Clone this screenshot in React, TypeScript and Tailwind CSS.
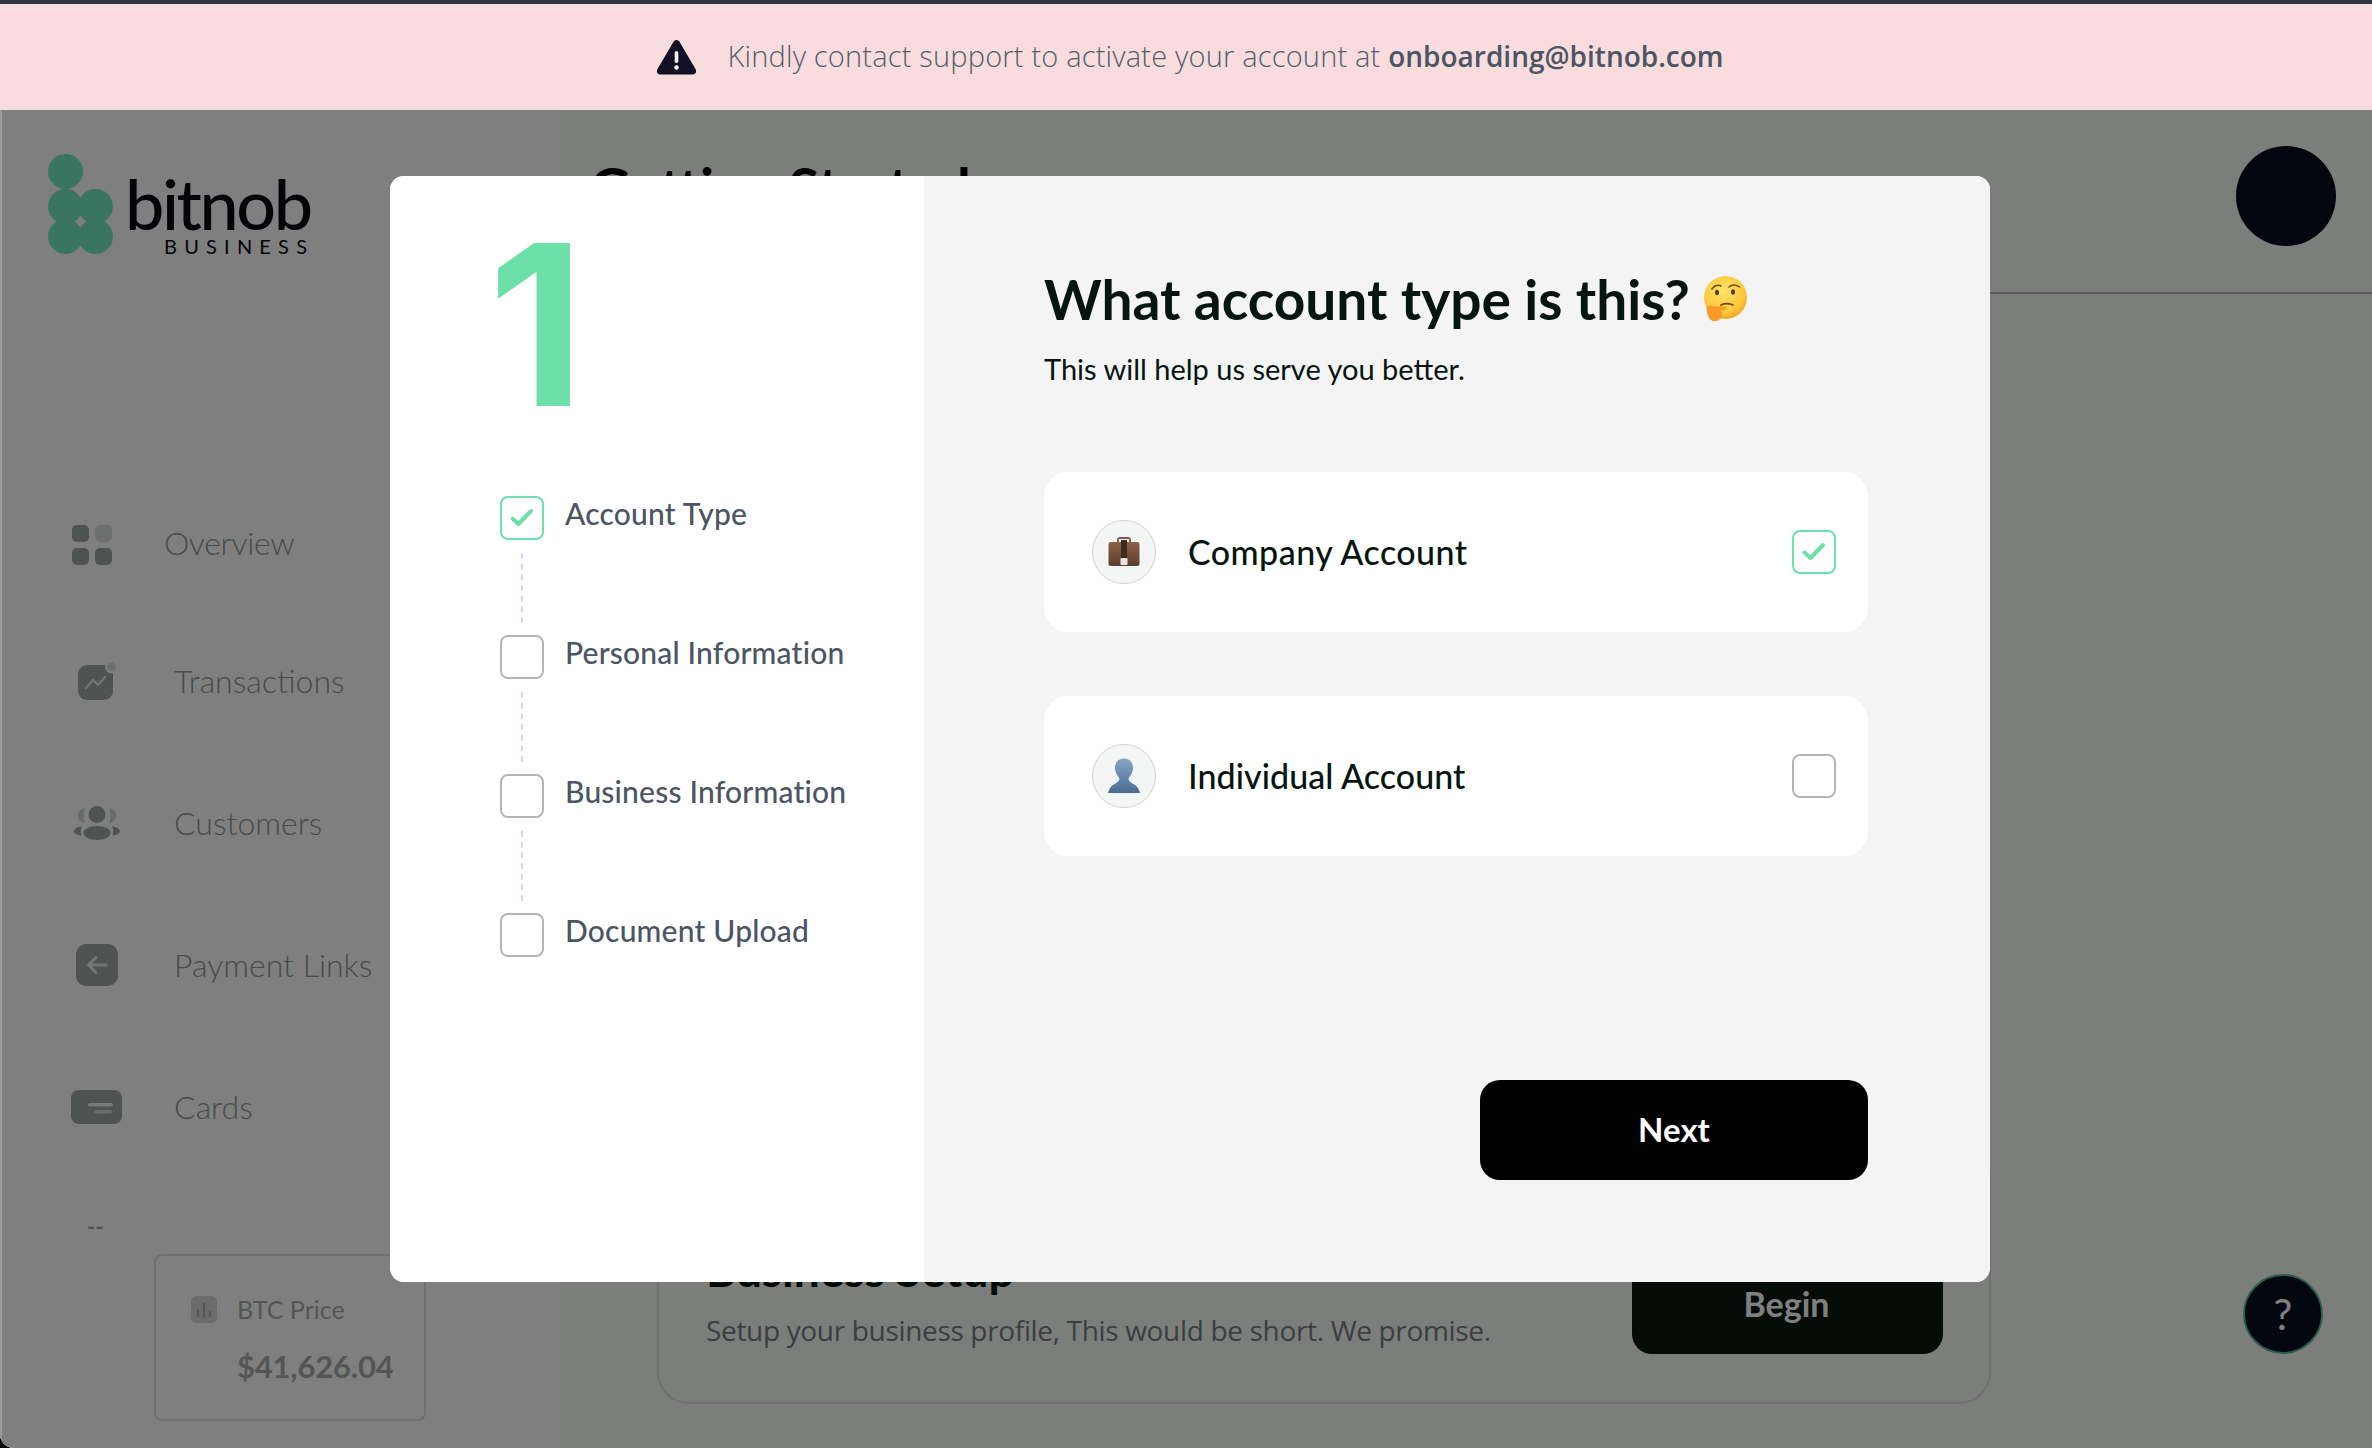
import React from "react";

const Check = ({ on }: { on?: boolean }) => (
  <div
    className={`w-[44px] h-[44px] shrink-0 rounded-[8px] border-2 flex items-center justify-center ${
      on ? "border-[#6ddfa8]" : "border-[#b4b6b6]"
    }`}
  >
    {on && (
      <svg width="24" height="20" viewBox="0 0 24 20" fill="none">
        <path d="M2.5 10.5L8.5 16L21 3" stroke="#6ddfa8" strokeWidth="4" strokeLinecap="round" strokeLinejoin="round" />
      </svg>
    )}
  </div>
);

const LogoMark = () => (
  <svg width="66" height="100" viewBox="0 0 66 100" className="shrink-0">
    <g fill="#6eeac0" fillOpacity="0.96">
      <circle cx="17.5" cy="17.5" r="17.5" />
      <circle cx="17.5" cy="52.5" r="17.5" />
      <circle cx="47.5" cy="52.5" r="17.5" />
      <circle cx="17.5" cy="82.5" r="17.5" />
      <circle cx="47.5" cy="82.5" r="17.5" />
    </g>
  </svg>
);

const OverviewIcon = () => (
  <div className="grid grid-cols-2 gap-[6px] w-[40px] mt-[3px]">
    <div className="h-[17px] rounded-[5px] bg-[#9ea6a4]" />
    <div className="h-[17px] rounded-[5px] bg-[#dcdede]" />
    <div className="h-[17px] rounded-[5px] bg-[#9ea6a4]" />
    <div className="h-[17px] rounded-[5px] bg-[#9ea6a4]" />
  </div>
);

const TransactionsIcon = () => (
  <svg width="40" height="40" viewBox="0 0 40 40">
    <rect x="0" y="4" width="35" height="35" rx="9" fill="#9ea6a4" />
    <circle cx="33.5" cy="6" r="5.5" fill="#dcdede" stroke="#ffffff" strokeWidth="2" />
    <path d="M8 27L15 19L20 24L27 16" fill="none" stroke="#ffffff" strokeOpacity="0.75" strokeWidth="2.4" strokeLinecap="round" strokeLinejoin="round" />
  </svg>
);

const CustomersIcon = () => (
  <svg width="46" height="34" viewBox="0 0 46 34">
    <path d="M11 2C6 3 4 6 4 9.500C4 13 6 16 11 17C9 12 9 7 11 2Z" fill="#d0d2d2" />
    <path d="M35 2C40 3 42 6 42 9.500C42 13 40 16 35 17C37 12 37 7 35 2Z" fill="#d0d2d2" />
    <circle cx="23" cy="8.500" r="8.500" fill="#9ea6a4" />
    <ellipse cx="23" cy="27" rx="13.500" ry="7" fill="#9ea6a4" />
    <path d="M8 20C3 21 0 23 0 25.500C0 27.500 3 29 7.500 29.500C6.500 26.500 6.500 23 8 20Z" fill="#9ea6a4" />
    <path d="M38 20C43 21 46 23 46 25.500C46 27.500 43 29 38.500 29.500C39.500 26.500 39.500 23 38 20Z" fill="#9ea6a4" />
  </svg>
);

const LinksIcon = () => (
  <svg width="42" height="42" viewBox="0 0 42 42">
    <rect width="42" height="42" rx="10" fill="#9ea6a4" />
    <path d="M30 21H13M20 13.500L12.500 21L20 28.500" fill="none" stroke="#ffffff" strokeOpacity="0.8" strokeWidth="3" strokeLinecap="round" strokeLinejoin="round" />
  </svg>
);

const CardsIcon = () => (
  <svg width="51" height="34" viewBox="0 0 51 34">
    <rect width="51" height="34" rx="8" fill="#9ea6a4" />
    <rect x="17" y="13" width="25" height="3.600" rx="1.800" fill="#ffffff" fillOpacity="0.85" />
    <rect x="23" y="20" width="18" height="3.600" rx="1.800" fill="#ffffff" fillOpacity="0.6" />
  </svg>
);

const navItems = [
  { label: "Overview", icon: <OverviewIcon />, row: "mt-[269px] pl-[72px] tracking-[-0.35px]", slot: "w-[92px]" },
  { label: "Transactions", icon: <TransactionsIcon />, row: "mt-[98px] pl-[78px]", slot: "w-[96px]" },
  { label: "Customers", icon: <CustomersIcon />, row: "mt-[102px] pl-[74px]", slot: "w-[100px]" },
  { label: "Payment Links", icon: <LinksIcon />, row: "mt-[102px] pl-[76px]", slot: "w-[98px]" },
  { label: "Cards", icon: <CardsIcon />, row: "mt-[102px] pl-[71px]", slot: "w-[103px]" },
];

const steps = ["Account Type", "Personal Information", "Business Information", "Document Upload"];

const ThinkingEmoji = () => (
  <svg width="46" height="46" viewBox="0 0 46 46" className="shrink-0">
    <defs>
      <radialGradient id="face" cx="0.45" cy="0.35" r="0.7">
        <stop offset="0" stopColor="#ffe36b" />
        <stop offset="0.7" stopColor="#fcc73c" />
        <stop offset="1" stopColor="#f09a1c" />
      </radialGradient>
    </defs>
    <circle cx="23.500" cy="21.500" r="21.500" fill="url(#face)" />
    <path d="M10 13C12 9.500 16 8.500 19 10" fill="none" stroke="#7a4a12" strokeWidth="1.600" strokeLinecap="round" />
    <path d="M27 11C30 8 35 8.500 37.500 11" fill="none" stroke="#7a4a12" strokeWidth="1.600" strokeLinecap="round" />
    <ellipse cx="15" cy="16.500" rx="2" ry="2.800" fill="#5b3a14" />
    <ellipse cx="31" cy="16" rx="2" ry="2.800" fill="#5b3a14" />
    <path d="M19 29C23 27 27 27.500 31 29" fill="none" stroke="#7a4a12" strokeWidth="1.800" strokeLinecap="round" />
    <path d="M5 30C8 29 13 31 17 30.500C21 30 25 31 24 33C23 34.500 20 34 19 35C21 37 20 42 17 44C13 46.500 8 45 6.500 41C5 37 4 33 5 30Z" fill="#f79a2a" />
  </svg>
);

const Briefcase = () => (
  <svg width="32" height="30" viewBox="0 0 32 30">
    <defs>
      <linearGradient id="bag" x1="0" y1="0" x2="0" y2="1">
        <stop offset="0" stopColor="#8a6248" />
        <stop offset="1" stopColor="#5d3d2b" />
      </linearGradient>
    </defs>
    <path d="M10 6V2.500C10 1.500 11 1 12 1H20C21 1 22 1.500 22 2.500V6" fill="none" stroke="#7d5a44" strokeWidth="2" />
    <rect x="0.500" y="5" width="31" height="24" rx="2.500" fill="url(#bag)" />
    <rect x="13" y="3" width="6" height="19" fill="#3f2a1e" />
    <rect x="12.500" y="21" width="7" height="7" rx="1" fill="#e8e6e4" />
  </svg>
);

const Person = () => (
  <svg width="32" height="36" viewBox="0 0 32 36">
    <defs>
      <linearGradient id="user" x1="0" y1="0" x2="0" y2="1">
        <stop offset="0" stopColor="#86a5c5" />
        <stop offset="1" stopColor="#4a6c94" />
      </linearGradient>
    </defs>
    <path d="M16 0.500C22 0.500 25 5 25 10C25 15 22 18 20.500 20.500C20.500 25 28 26 30 30C31 32 32 34 32 35H0C0 34 1 32 2 30C4 26 11.500 25 11.500 20.500C10 18 7 15 7 10C7 5 10 0.500 16 0.500Z" fill="url(#user)" />
  </svg>
);

const AccountCard = ({ label, icon, on, className }: { label: string; icon: React.ReactNode; on?: boolean; className?: string }) => (
  <div className={`h-[160px] rounded-[24px] bg-white flex items-center pl-[48px] pr-[32px] ${className ?? ""}`}>
    <div className="w-[64px] h-[64px] rounded-full border border-[#d2d2d2] bg-[#f4f5f5] flex items-center justify-center">{icon}</div>
    <p className={`ml-[32px] flex-1 font-[Lato] font-medium text-[34px] text-[#06150f] -mt-[2px] ${on ? "tracking-[0.45px]" : "tracking-[0.05px]"}`}>{label}</p>
    <Check on={on} />
  </div>
);

const App = () => {
  return (
    <div className="h-screen w-full overflow-hidden bg-black font-[Lato]">
      <div className="h-[110px] border-t-4 border-[#2f3342] bg-[#f9dcde] flex items-center justify-center pl-[8px]">
        <svg width="41" height="36" viewBox="0 0 41 36" className="shrink-0">
          <path d="M20.500 1C22.500 1 23.500 2.500 24.500 4.500L39.500 30C41 33 39.500 35.500 36.500 35.500H4.500C1.500 35.500 0 33 1.500 30L16.500 4.500C17.500 2.500 18.500 1 20.500 1Z" fill="#120e26" />
          <rect x="18.700" y="12" width="3.600" height="12" rx="1.800" fill="#ffffff" />
          <circle cx="20.500" cy="28.500" r="2.200" fill="#ffffff" />
        </svg>
        <p className="ml-[30px] -mt-[2px] font-['Open_Sans'] font-light text-[29px] text-[#54606c] tracking-[0.18px] whitespace-nowrap">
          Kindly contact support to activate your account at{" "}
          <span className="font-semibold text-[28px] tracking-[0px] text-[#4b5563]">onboarding@bitnob.com</span>
        </p>
      </div>

      <div className="relative h-[1338px] flex overflow-hidden rounded-bl-[14px] bg-[#f8fcf8]">
        <aside className="w-[560px] shrink-0 bg-white flex flex-col">
          <div className="pt-[44px] pl-[48px] flex items-start h-[144px]">
            <LogoMark />
            <div className="ml-[11px] mt-[18px]">
              <p className="font-[Lato] font-medium text-[70px] leading-[62px] tracking-[-2.4px] text-[#04080f]">bitnob</p>
              <p className="ml-[39px] mt-[2px] font-[Lato] text-[20px] leading-[20px] tracking-[7.2px] text-[#04080f]">BUSINESS</p>
            </div>
          </div>

          {navItems.map((item) => (
            <div key={item.label} className={`h-[40px] flex items-center ${item.row}`}>
              <div className={`${item.slot} shrink-0`}>{item.icon}</div>
              <p className="font-[Lato] font-light text-[32px] text-[#8f9795] whitespace-nowrap">{item.label}</p>
            </div>
          ))}

          <p className="ml-[87px] mt-[94px] h-[12px] leading-[12px] text-[22px] font-bold text-[#9ea6a4]">--</p>

          <div className="ml-[154px] mt-[21px] w-[272px] h-[167px] rounded-[8px] border-2 border-[#dcdede] pl-[35px] pt-[38px]">
            <div className="flex items-center">
              <div className="w-[26px] h-[27px] rounded-[5px] bg-[#d6d7d7] flex items-end justify-center gap-[4px] pb-[6px]">
                <div className="w-[2px] h-[8px] bg-[#a8acab]" />
                <div className="w-[2px] h-[14px] bg-[#a8acab]" />
                <div className="w-[2px] h-[6px] bg-[#a8acab]" />
              </div>
              <p className="ml-[20px] font-[Lato] text-[25px] leading-[30px] text-[#a8acab]">BTC Price</p>
            </div>
            <p className="ml-[46px] mt-[22px] font-[Lato] font-bold text-[31px] leading-[40px] tracking-[-0.2px] text-[#a8acab] whitespace-nowrap">$41,626.04</p>
          </div>
        </aside>

        <main className="flex-1 flex flex-col min-w-0">
          <div className="h-[184px] border-b-2 border-[#b8b8b8] flex items-start justify-between pl-[30px] pr-[36px]">
            <h1 className="mt-[43px] font-[Lato] font-bold text-[56px] leading-[68px] text-black">Getting Started</h1>
            <div className="mt-[36px] w-[100px] h-[100px] rounded-full bg-[#040c1e]" />
          </div>

          <div className="mt-auto mb-[44px] ml-[97px] w-[1334px] h-[260px] rounded-[32px] border-2 border-[#dfe0df] flex items-end justify-between pl-[47px] pr-[46px] pb-[48px]">
            <div>
              <h2 className="font-[Lato] font-bold text-[46px] leading-[56px] text-[#06150f]">Business Setup</h2>
              <p className="mt-[13px] mb-[5px] font-['Open_Sans'] text-[28px] leading-[38px] text-[#787e84] tracking-[-0.33px] whitespace-nowrap">
                Setup your business profile, This would be short. We promise.
              </p>
            </div>
            <div className="w-[311px] h-[100px] rounded-[20px] bg-[#08190f] flex items-start justify-center pr-[2px]">
              <span className="mt-[28px] font-[Lato] font-bold text-[34px] leading-[44px] text-white">Begin</span>
            </div>
          </div>
        </main>

        <div className="absolute right-[49px] bottom-[94px] w-[80px] h-[80px] rounded-full bg-[#040c1e] border-2 border-[#58b89c] flex items-center justify-center font-[Lato] font-normal text-[42px] text-white">
          ?
        </div>

        <div className="absolute inset-0 bg-black/50 border-l-2 border-[#9a9a9a]" />

        <div className="absolute left-[390px] top-[66px] w-[1600px] h-[1106px] flex rounded-[14px] overflow-hidden bg-white">
          <div className="w-[534px] shrink-0 bg-white pl-[110px]">
            <p className="mt-[34px] -ml-[12px] h-[230px] font-[Inter] font-bold text-[224px] leading-[230px] text-[#6ddfa8]">1</p>
            <div className="mt-[56px] flex flex-col">
              {steps.map((step, i) => (
                <div key={step}>
                  <div className="flex items-start">
                    <Check on={i === 0} />
                    <p className="ml-[21px] -mt-[3px] font-[Lato] font-medium text-[30px] leading-[40px] tracking-[0.2px] text-[#4b5563] whitespace-nowrap">{step}</p>
                  </div>
                  {i < steps.length - 1 && (
                    <div className="ml-[21px] mt-[13px] mb-[12px] h-[70px] w-0 border-l-2 border-dashed border-[#d4d4fa]" />
                  )}
                </div>
              ))}
            </div>
          </div>

          <div className="flex-1 bg-[#f4f4f4] flex flex-col pl-[120px] pr-[122px] pb-[102px]">
            <div className="mt-[91px] flex items-center">
              <h1 className="font-[Lato] font-bold text-[55px] leading-[64px] text-[#06150f] whitespace-nowrap">What account type is this?</h1>
              <div className="ml-[12px]">
                <ThinkingEmoji />
              </div>
            </div>
            <p className="mt-[18px] font-[Lato] font-normal text-[29px] leading-[40px] text-[#06150f]">This will help us serve you better.</p>

            <AccountCard className="mt-[83px]" label="Company Account" icon={<Briefcase />} on />
            <AccountCard className="mt-[64px]" label="Individual Account" icon={<Person />} />

            <button className="mt-auto self-end w-[388px] h-[100px] rounded-[20px] bg-black text-white font-[Lato] font-bold text-[33px]">Next</button>
          </div>
        </div>
      </div>
    </div>
  );
};

export default App;
